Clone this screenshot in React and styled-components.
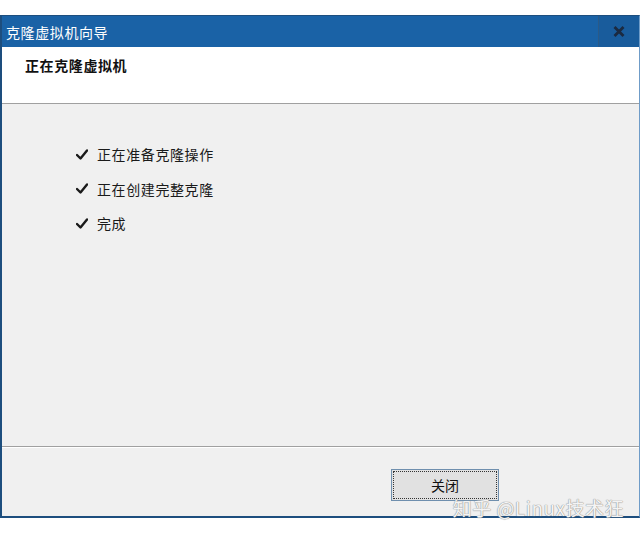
import React from "react";
import styled, {createGlobalStyle} from "styled-components";

const Global = createGlobalStyle`
  html, body {
    margin: 0;
    padding: 0;
    background: #ffffff;
    font-family: "Noto Sans CJK SC", "Liberation Sans", sans-serif;
  }
`

const steps = ["正在准备克隆操作", "正在创建完整克隆", "完成"];

const Check = () => (
    <svg width="12" height="11" viewBox="0 0 12 11">
        <path d="M1 6 L4.5 9.5 L11 1.5" fill="none" stroke="#1a1a1a" strokeWidth="2.4" strokeLinecap="round" strokeLinejoin="round"/>
    </svg>
)

const App = () => {
    return (
        <Page>
            <Global/>
            <Window>
                <TitleBar>
                    <Title>克隆虚拟机向导</Title>
                    <CloseBtn>
                        <svg width="12" height="11" viewBox="0 0 12 11">
                            <path d="M1.5 1 L10.5 10 M10.5 1 L1.5 10" stroke="#1b2a40" strokeWidth="2.8"/>
                        </svg>
                    </CloseBtn>
                </TitleBar>
                <Header>
                    <HeaderText>正在克隆虚拟机</HeaderText>
                </Header>
                <Content>
                    {steps.map((s, i) => (
                        <Step key={i}>
                            <Check/>
                            <span>{s}</span>
                        </Step>
                    ))}
                </Content>
                <Footer>
                    <Button>关闭</Button>
                </Footer>
            </Window>
            <Watermark>知乎 @Linux技术狂</Watermark>
        </Page>
    )
}

const Page = styled.div`
  position: relative;
  width: 640px;
  height: 535px;
  padding-top: 15px;
  box-sizing: border-box;
`

const Window = styled.div`
  display: flex;
  flex-direction: column;
  height: 503px;
  box-sizing: border-box;
  border: 1px solid #1d4e7e;
  border-left-width: 2px;
  border-bottom-width: 2px;
  border-right-color: #6f9cc8;
  background: #f0f0f0;
`

const TitleBar = styled.div`
  display: flex;
  align-items: center;
  justify-content: space-between;
  height: 31px;
  background: #1a62a6;
`

const Title = styled.div`
  color: #ffffff;
  font-size: 14px;
  letter-spacing: 0.6px;
  padding-left: 4px;
`

const CloseBtn = styled.div`
  display: flex;
  align-items: center;
  justify-content: center;
  width: 40px;
  height: 100%;
  background: #195c9c;
  border-left: 1px solid #2a5a88;
`

const Header = styled.div`
  display: flex;
  align-items: flex-start;
  background: #ffffff;
  border-bottom: 1px solid #a0a0a0;
  padding: 8px 0 0 23px;
  box-sizing: content-box;
  height: 48px;
`

const HeaderText = styled.div`
  font-size: 14px;
  font-weight: bold;
  color: #111;
  letter-spacing: 0.6px;
`

const Content = styled.div`
  flex: 1;
  display: flex;
  flex-direction: column;
  padding: 33px 0 0 74px;
  background: #f0f0f0;
`

const Step = styled.div`
  display: flex;
  align-items: center;
  gap: 9px;
  height: 34.5px;
  font-size: 14px;
  letter-spacing: 0.6px;
  color: #1a1a1a;
`

const Footer = styled.div`
  display: flex;
  justify-content: flex-end;
  align-items: flex-start;
  height: 70px;
  padding: 22px 140px 0 0;
  box-sizing: border-box;
  border-top: 1px solid #a0a0a0;
  box-shadow: inset 0 1px 0 #ffffff;
  background: #f0f0f0;
`

const Button = styled.div`
  display: flex;
  align-items: center;
  justify-content: center;
  width: 108px;
  height: 32px;
  box-sizing: border-box;
  border: 1px solid #6f8fae;
  outline: 1px dotted #333;
  outline-offset: -3px;
  background: #e1e1e1;
  font-size: 14px;
  color: #111;
`

const Watermark = styled.div`
  position: absolute;
  right: 16px;
  bottom: 14px;
  font-size: 19px;
  color: #f4f4f4;
  letter-spacing: 0.5px;
  text-shadow: 0 0 1px #8a8a8a, 0 0 1px #8a8a8a;
`

export default App;
